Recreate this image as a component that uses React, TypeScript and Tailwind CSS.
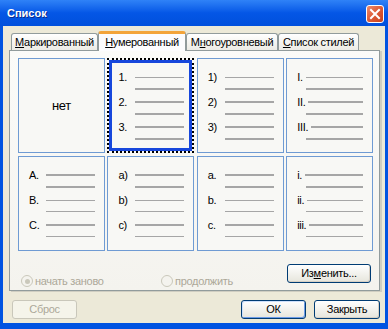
type Cell = {
  labels?: string[];
  roman?: boolean;
  none?: boolean;
  selected?: boolean;
  thick?: boolean[];
};

const TOP = [false, true, true, true, true, true];
const BOTTOM = [true, true, false, false, true, false];

const cells: Cell[] = [
  { none: true },
  { labels: ['1.', '2.', '3.'], selected: true, thick: TOP },
  { labels: ['1)', '2)', '3)'], thick: TOP },
  { labels: ['I.', 'II.', 'III.'], roman: true, thick: TOP },
  { labels: ['A.', 'B.', 'C.'], thick: BOTTOM },
  { labels: ['a)', 'b)', 'c)'], thick: BOTTOM },
  { labels: ['a.', 'b.', 'c.'], thick: BOTTOM },
  { labels: ['i.', 'ii.', 'iii.'], roman: true, thick: BOTTOM },
];

function Preview({ cell }: { cell: Cell }) {
  const pad = cell.selected ? 'pt-[7px] pl-[6px] pr-[5px]' : 'pt-[11px] pl-[10px] pr-[9px]';
  return (
    <div className={`flex flex-col gap-[5px] ${pad}`}>
      {cell.labels!.map((label, i) => (
        <div key={label}>
          <div className="flex h-[14px] items-center">
            <span className={cell.roman ? 'mr-[3px] shrink-0' : 'w-[17px] shrink-0'}>{label}</span>
            <div className={`flex-1 bg-[#a6a6a6] ${cell.thick![i * 2] ? 'h-[2px]' : 'h-px'}`} />
          </div>
          <div className="mt-[4px] flex h-[2px] items-start">
            <div className={cell.roman ? 'w-[9px] shrink-0' : 'w-[17px] shrink-0'} />
            <div className={`flex-1 bg-[#a6a6a6] ${cell.thick![i * 2 + 1] ? 'h-[2px]' : 'h-px'}`} />
          </div>
        </div>
      ))}
    </div>
  );
}

function ListCell({ cell }: { cell: Cell }) {
  if (cell.none) {
    return (
      <div className="flex items-center justify-center border border-[#6f9bd3] bg-[#f8f8f5] text-[13px]">
        нет
      </div>
    );
  }
  if (cell.selected) {
    return (
      <div className="border-2 border-dotted border-black">
        <div className="h-full border-[3px] border-[#1747dc] bg-[#f8f8f5]">
          <Preview cell={cell} />
        </div>
      </div>
    );
  }
  return (
    <div className="border border-[#6f9bd3] bg-[#f8f8f5]">
      <Preview cell={cell} />
    </div>
  );
}

function Tab({ children, w, active }: { children: React.ReactNode; w: string; active?: boolean }) {
  if (active) {
    return (
      <div
        className={`relative z-10 -mb-px flex h-[20px] items-center justify-center rounded-t-[3px] border-x border-t-[3px] border-x-[#919b9c] border-t-[#f3a43a] bg-[#fcfcfe] pb-[1px] ${w}`}
      >
        {children}
      </div>
    );
  }
  return (
    <div
      className={`flex h-[17px] items-center justify-center rounded-t-[3px] border-x border-t border-[#919b9c] bg-gradient-to-b from-white to-[#ecebe5] ${w}`}
    >
      {children}
    </div>
  );
}

function Radio({ checked, label }: { checked?: boolean; label: string }) {
  return (
    <div className="flex items-center gap-[2px] text-[#aca899]">
      <div className="flex h-[12px] w-[12px] items-center justify-center rounded-full border border-[#cac8bb] bg-[#f4f3ee]">
        {checked && <div className="h-[5px] w-[5px] rounded-full bg-[#cac8bb]" />}
      </div>
      <span>{label}</span>
    </div>
  );
}

function Button({
  children,
  w,
  disabled,
  def,
}: {
  children: React.ReactNode;
  w: string;
  disabled?: boolean;
  def?: boolean;
}) {
  if (disabled) {
    return (
      <div
        className={`flex h-[19px] items-center justify-center rounded-[3px] border border-[#c9c7ba] bg-[#f5f4ea] text-[#aca899] ${w}`}
      >
        {children}
      </div>
    );
  }
  return (
    <div
      className={`flex h-[19px] items-center justify-center rounded-[3px] border border-[#003c74] bg-gradient-to-b from-white to-[#e6e5dc] ${
        def ? 'shadow-[inset_1px_1px_0_#cee0fb,inset_-1px_-1px_0_#6d9be6]' : 'shadow-[inset_-1px_-1px_0_#d6d0c5]'
      } ${w}`}
    >
      {children}
    </div>
  );
}

export default function App() {
  return (
    <div className="flex h-[329px] w-[388px] flex-col bg-[#0053e1] font-['Liberation_Sans',Arial,sans-serif] text-[11px] tracking-[-0.3px] text-black">
      {/* title bar */}
      <div className="flex h-[26px] items-center bg-gradient-to-b from-[#2f82f7] via-[#0456e6] to-[#0050dc] pl-[7px] pr-[4px]">
        <span className="text-[11px] font-bold tracking-normal text-white [text-shadow:1px_1px_0_#0b2c8c]">
          Список
        </span>
        <div className="ml-auto mt-[1px] flex h-[18px] w-[18px] items-center justify-center rounded-[3px] border border-white bg-gradient-to-br from-[#ec8a6c] via-[#dd5a36] to-[#c7401b]">
          <svg width="12" height="12" viewBox="0 0 12 12">
            <path d="M2 2 L10 10 M10 2 L2 10" stroke="white" strokeWidth="2" strokeLinecap="square" />
          </svg>
        </div>
      </div>

      {/* body */}
      <div className="mx-[3px] mb-[6px] flex flex-1 flex-col bg-[#ece9d8] pl-[6px] pr-[5px] pt-[5px]">
        <div className="flex h-[19px] items-end pl-[2px]">
          <Tab w="w-[87px]">
            <span>
              <span className="underline">М</span>аркированный
            </span>
          </Tab>
          <Tab w="w-[88px]" active>
            <span>
              <span className="underline">Н</span>умерованный
            </span>
          </Tab>
          <Tab w="w-[92px]">
            <span>
              М<span className="underline">н</span>огоуровневый
            </span>
          </Tab>
          <Tab w="w-[81px]">
            <span>
              <span className="underline">С</span>писок стилей
            </span>
          </Tab>
        </div>

        <div className="flex h-[241px] flex-col border border-[#919b9c] bg-gradient-to-b from-[#fbfbf9] to-[#f4f3ee] pl-[8px] pr-[7px] pt-[7px] shadow-[2px_1px_0_#cfcdc1]">
          <div className="grid w-[355px] grid-cols-4 grid-rows-[95px_95px] gap-x-[2.5px] gap-y-[3px]">
            {cells.map((c, i) => (
              <ListCell key={i} cell={c} />
            ))}
          </div>
          <div className="mt-[13px] flex items-start">
            <div className="ml-[3px] mt-[9px] flex w-[140px]">
              <Radio checked label="начать заново" />
            </div>
            <div className="mt-[9px]">
              <Radio label="продолжить" />
            </div>
            <div className="ml-auto mr-[1px]">
              <Button w="w-[84px]">
                <span>
                  Из<span className="underline">м</span>енить...
                </span>
              </Button>
            </div>
          </div>
        </div>

        <div className="mt-[9px] flex items-center">
          <div className="ml-[3px]">
            <Button w="w-[65px]" disabled>
              Сброс
            </Button>
          </div>
          <div className="ml-auto flex gap-[8px]">
            <Button w="w-[65px]" def>
              ОК
            </Button>
            <Button w="w-[66px]">Закрыть</Button>
          </div>
        </div>
      </div>
    </div>
  );
}
